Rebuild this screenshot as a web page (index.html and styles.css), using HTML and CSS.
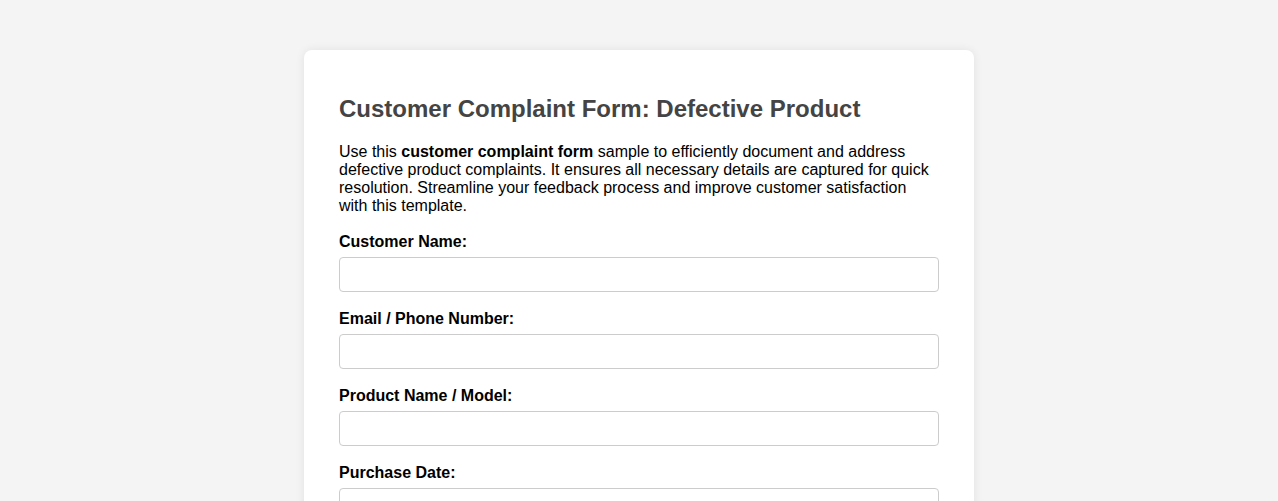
FILE: index.html
```html
<!DOCTYPE html>
<html lang="en">
<head>
<meta charset="utf-8">
<title>Customer Complaint Form: Defective Product</title>
<link rel="stylesheet" href="styles.css">
</head>
<body>
<main class="card">
  <h1 class="title">Customer Complaint Form: Defective Product</h1>
  <p class="intro">Use this <strong>customer complaint form</strong> sample to efficiently document and address defective product complaints. It ensures all necessary details are captured for quick resolution. Streamline your feedback process and improve customer satisfaction with this template.</p>
  <form class="form">
    <div class="field">
      <label class="label" for="name">Customer Name:</label>
      <input class="input" type="text" id="name">
    </div>
    <div class="field">
      <label class="label" for="contact">Email / Phone Number:</label>
      <input class="input" type="text" id="contact">
    </div>
    <div class="field">
      <label class="label" for="product">Product Name / Model:</label>
      <input class="input" type="text" id="product">
    </div>
    <div class="field">
      <label class="label" for="date">Purchase Date:</label>
      <input class="input input-date" type="date" id="date">
    </div>
  </form>
</main>
</body>
</html>
```
FILE: styles.css
```css
html, body {
  margin: 0;
  padding: 0;
  background: #f4f4f4;
}
body {
  font-family: "Liberation Sans", Arial, sans-serif;
  color: #000;
  padding-top: 50px;
}
.card {
  box-sizing: border-box;
  width: 670px;
  margin: 0 auto;
  background: #fff;
  border-radius: 8px;
  box-shadow: 0 0 10px rgba(0, 0, 0, 0.08);
  padding: 45px 35px 35px;
}
.title {
  margin: 0 0 20px;
  font-size: 24px;
  line-height: 28px;
  font-weight: bold;
  color: #444;
}
.intro {
  margin: 0 0 18px;
  font-size: 16px;
  line-height: 18px;
}
.form {
  display: flex;
  flex-direction: column;
  gap: 18px;
}
.field {
  display: flex;
  flex-direction: column;
  gap: 6px;
}
.label {
  font-size: 16px;
  line-height: 18px;
  font-weight: bold;
}
.input {
  box-sizing: border-box;
  width: 100%;
  height: 35px;
  margin: 0;
  padding: 8px;
  border: 1px solid #ccc;
  border-radius: 4px;
  font-family: "Liberation Sans", Arial, sans-serif;
  font-size: 16px;
  background: #fff;
}
.input-date {
  height: 42px;
  padding: 12px 8px 8px;
  color: #000;
}
```
